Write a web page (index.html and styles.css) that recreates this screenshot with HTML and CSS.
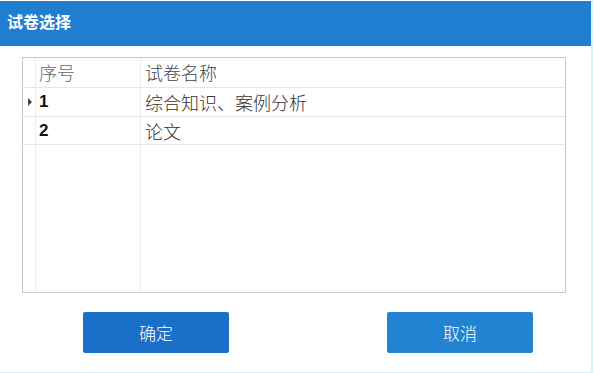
FILE: index.html
```html
<!DOCTYPE html>
<html lang="zh-CN">
<head>
  <meta charset="UTF-8" />
  <title>试卷选择</title>
  <link rel="stylesheet" href="styles.css">
</head>
<body>
  <div class="dialog">
    <div class="title-bar">试卷选择</div>

    <div class="grid">
      <div class="row head">
        <div class="cell ind"></div>
        <div class="cell no">序号</div>
        <div class="cell name">试卷名称</div>
      </div>
      <div class="row">
        <div class="cell ind"><span class="arrow"></span></div>
        <div class="cell no num">1</div>
        <div class="cell name">综合知识、案例分析</div>
      </div>
      <div class="row">
        <div class="cell ind"></div>
        <div class="cell no num">2</div>
        <div class="cell name">论文</div>
      </div>
      <div class="row filler">
        <div class="cell ind"></div>
        <div class="cell no"></div>
        <div class="cell name"></div>
      </div>
    </div>

    <div class="actions">
      <button class="btn ok">确定</button>
      <button class="btn cancel">取消</button>
    </div>
  </div>
</body>
</html>
```

FILE: styles.css
```css
html, body { margin: 0; padding: 0; background: #fff; }
body { font-family: "Noto Sans CJK SC", "Noto Sans", sans-serif; }

.dialog {
  width: 591px;
  height: 371px;
  border-right: 2px solid #d2f4fb;
  border-bottom: 2px solid #d2f4fb;
  background: #fff;
}

.title-bar {
  height: 45px;
  margin-top: 1px;
  background: #1f7ed0;
  color: #fff;
  font-size: 16px;
  font-weight: bold;
  line-height: 40px;
  padding-left: 7px;
}

.grid {
  margin: 11px 0 0 22px;
  width: 542px;
  height: 234px;
  border: 1px solid #c8c8c8;
  display: flex;
  flex-direction: column;
}
.row {
  display: grid;
  grid-template-columns: 13px 105px 1fr;
  border-bottom: 1px solid #e6e6e6;
}
.row.head { height: 29px; }
.row:nth-child(2) { height: 28px; }
.row:nth-child(3) { height: 27px; }
.row.filler { flex: 1; border-bottom: none; }

.cell {
  border-right: 1px solid #ececec;
  font-size: 18px;
  font-weight: 300;
  color: #333;
  line-height: 28px;
  padding-left: 3px;
}
.cell.name { border-right: none; padding-left: 4px; }
.cell.ind { padding: 0; position: relative; }
.head .cell { color: #666; }
.head .cell.name { color: #444; }
.cell.num { font-weight: bold; color: #111; font-family: "Liberation Sans", sans-serif; font-size: 17px; }

.arrow {
  position: absolute;
  left: 5px;
  top: 10px;
  border-left: 4px solid #444;
  border-top: 4px solid transparent;
  border-bottom: 4px solid transparent;
}

.actions {
  display: flex;
  margin-top: 19px;
  padding-left: 83px;
  gap: 158px;
}
.btn {
  width: 146px;
  height: 41px;
  border: none;
  border-radius: 2px;
  color: #fff;
  font-family: "Noto Sans CJK SC", sans-serif;
  font-size: 17px;
  font-weight: 300;
  cursor: pointer;
}
.btn.ok { background: #1a70c8; }
.btn.cancel { background: #2283d3; }
```
